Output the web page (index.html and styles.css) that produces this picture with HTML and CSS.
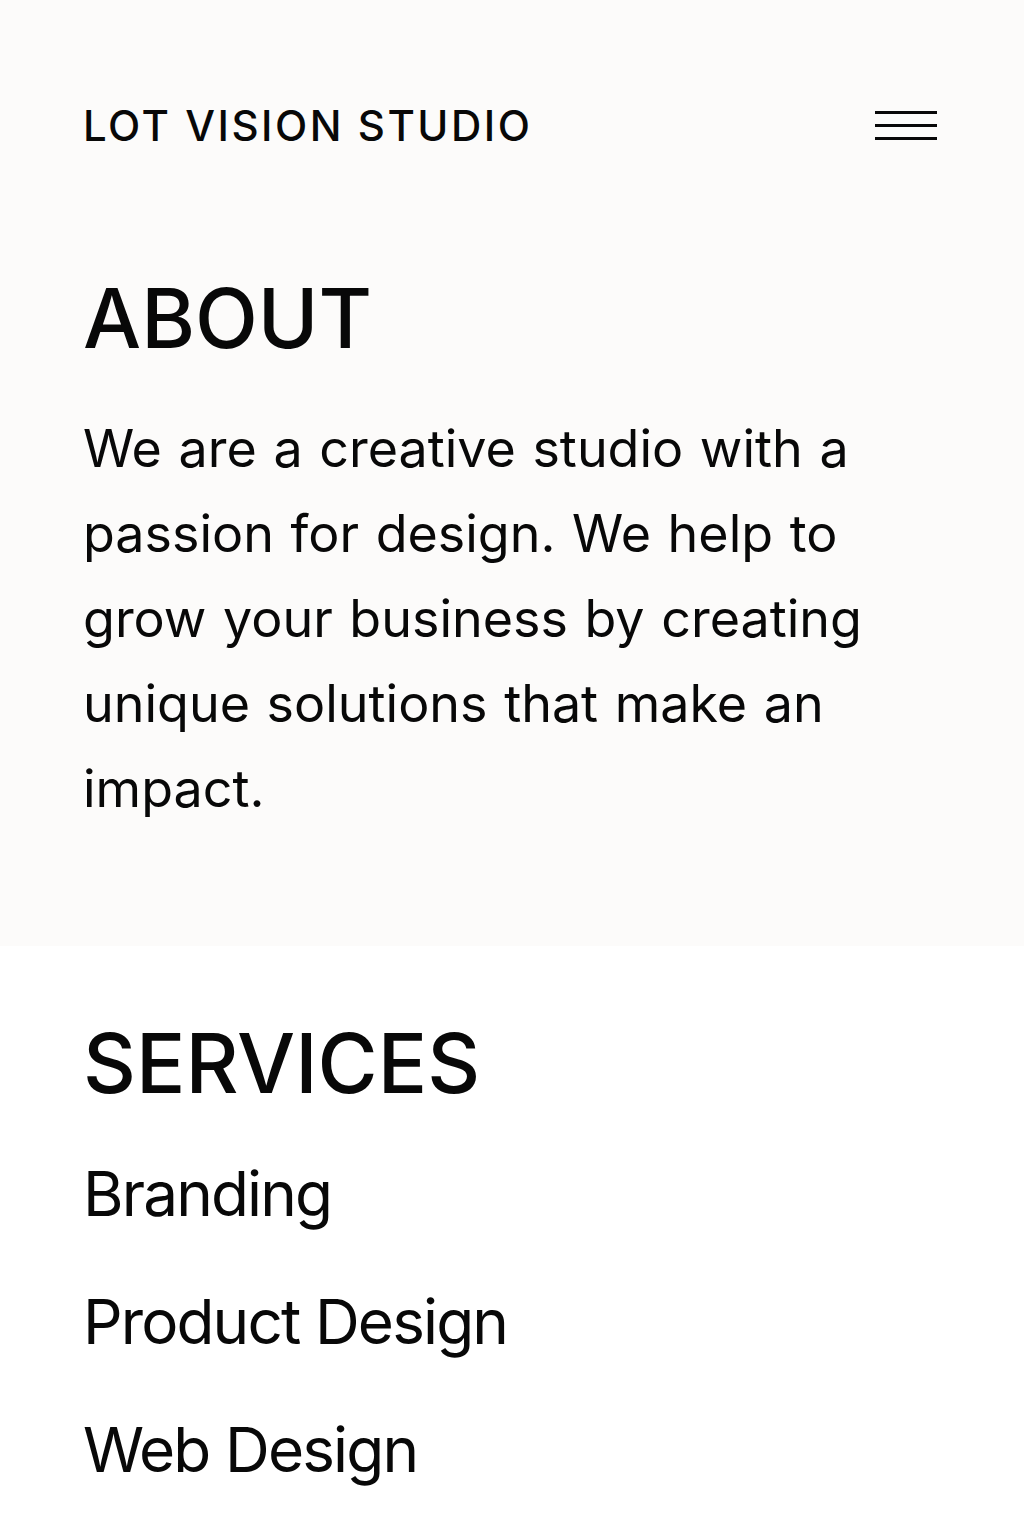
FILE: index.html
```html
<!DOCTYPE html>
<html lang="en">
<head>
<meta charset="utf-8">
<title>Lot Vision Studio</title>
<link rel="stylesheet" href="styles.css">
</head>
<body>
<section class="intro">
  <header class="site-header">
    <div class="brand">LOT VISION STUDIO</div>
    <button class="menu" aria-label="Menu">
      <span class="bar"></span>
      <span class="bar"></span>
      <span class="bar"></span>
    </button>
  </header>
  <h1 class="title">ABOUT</h1>
  <p class="lead">We are a creative studio with a<br>passion for design. We help to<br>grow your business by creating<br>unique solutions that make an<br>impact.</p>
</section>
<section class="services">
  <h2 class="title">SERVICES</h2>
  <ul class="service-list">
    <li>Branding</li>
    <li>Product Design</li>
    <li>Web Design</li>
  </ul>
</section>
</body>
</html>
```

FILE: styles.css
```css
* { box-sizing: border-box; }
html, body { margin: 0; padding: 0; }
body {
  font-family: Inter, "Noto Sans", sans-serif;
  color: #080808;
  background: #ffffff;
}
.intro {
  background: #fcfbfa;
  padding: 101px 87px 115px 83px;
}
.site-header {
  display: flex;
  justify-content: space-between;
  align-items: flex-start;
}
.brand {
  font-size: 42px;
  line-height: 50px;
  font-weight: 500;
  letter-spacing: 0.06em;
}
.menu {
  margin-top: 10px;
  width: 62px;
  padding: 0;
  border: 0;
  background: none;
  display: flex;
  flex-direction: column;
  gap: 10px;
}
.bar {
  display: block;
  width: 62px;
  height: 3px;
  background: #080808;
}
.title {
  margin: 0;
  font-size: 82px;
  line-height: 82px;
  font-weight: 500;
}
.intro .title { margin-top: 127px; }
.lead {
  margin: 46px 0 0;
  font-size: 52px;
  line-height: 85px;
  font-weight: 400;
  word-spacing: 2px;
}
.services {
  padding: 77px 83px 0;
}
.service-list {
  list-style: none;
  margin: 25px 0 0;
  padding: 0;
}
.service-list li {
  font-size: 62px;
  line-height: 128px;
  font-weight: 400;
  letter-spacing: -0.03em;
}
```
